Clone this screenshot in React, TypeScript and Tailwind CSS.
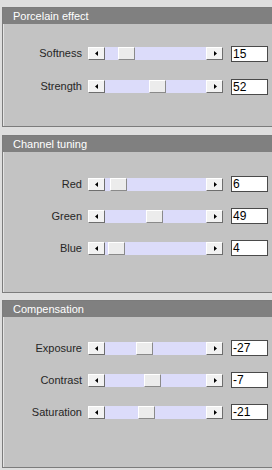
import React from "react";

type Row = { label: string; value: number; min: number; max: number };

const panels: { title: string; top: string; height: string; pt: string; rowH: string; rows: Row[] }[] = [
  {
    title: "Porcelain effect",
    top: "mt-[7px]",
    height: "h-[120px]",
    pt: "pt-[13px]",
    rowH: "h-[33px]",
    rows: [
      { label: "Softness", value: 15, min: 0, max: 100 },
      { label: "Strength", value: 52, min: 0, max: 100 },
    ],
  },
  {
    title: "Channel tuning",
    top: "mt-[8px]",
    height: "h-[158px]",
    pt: "pt-[16px]",
    rowH: "h-[32px]",
    rows: [
      { label: "Red", value: 6, min: 0, max: 100 },
      { label: "Green", value: 49, min: 0, max: 100 },
      { label: "Blue", value: 4, min: 0, max: 100 },
    ],
  },
  {
    title: "Compensation",
    top: "mt-[7px]",
    height: "h-[168px]",
    pt: "pt-[15px]",
    rowH: "h-[32px]",
    rows: [
      { label: "Exposure", value: -27, min: -100, max: 100 },
      { label: "Contrast", value: -7, min: -100, max: 100 },
      { label: "Saturation", value: -21, min: -100, max: 100 },
    ],
  },
];

function ArrowBtn({ dir }: { dir: "left" | "right" }) {
  return (
    <div className="w-[17px] h-[13px] bg-[#f2f2f2] border-t border-l border-t-white border-l-white border-b border-r border-b-[#6e6e6e] border-r-[#6e6e6e] flex items-center justify-center shrink-0">
      <svg width="4" height="5" viewBox="0 0 4 5">
        {dir === "left" ? (
          <polygon points="3,0 3,5 0,2.5" fill="#000" />
        ) : (
          <polygon points="1,0 1,5 4,2.5" fill="#000" />
        )}
      </svg>
    </div>
  );
}

function Slider({ value, min, max }: { value: number; min: number; max: number }) {
  const trackW = 101;
  const thumbW = 17;
  const left = Math.round(((value - min) / (max - min)) * (trackW - thumbW));
  return (
    <div className="flex items-center">
      <ArrowBtn dir="left" />
      <div className="relative w-[101px] h-[13px] bg-[#dcdcfa]">
        <div
          className="absolute top-0 w-[17px] h-[13px] bg-[#ececec] border-t border-l border-t-white border-l-white border-b border-r border-b-[#8a8a8a] border-r-[#8a8a8a]"
          style={{ left }}
        />
      </div>
      <ArrowBtn dir="right" />
    </div>
  );
}

export default function App() {
  return (
    <div
      className="w-[272px] h-[470px] overflow-hidden bg-[#dedede] pl-[2px] flex flex-col"
      style={{ fontFamily: '"Liberation Sans", Arial, sans-serif' }}
    >
      {panels.map((p) => (
        <div
          key={p.title}
          className={`${p.top} ${p.height} w-[290px] shrink-0 border-l border-t border-b border-[#7c7c7c] bg-[#c3c3c3] flex flex-col`}
        >
          <div className="h-[16px] bg-[#808080] text-white text-[11px] leading-[16px] pl-[10px] shrink-0">
            {p.title}
          </div>
          <div className={`flex-1 border-l border-l-[#e4e4e4] ${p.pt}`}>
            {p.rows.map((r) => (
              <div key={r.label} className={`${p.rowH} flex items-center`}>
                <div className="w-[78px] text-right text-[11px] text-[#262626] leading-none">
                  {r.label}
                </div>
                <div className="ml-[6px]">
                  <Slider value={r.value} min={r.min} max={r.max} />
                </div>
                <div className="ml-[8px] w-[37px] h-[16px] bg-white border border-[#4a4a4a] text-[12px] leading-[14px] pl-[1px] text-black">
                  {r.value}
                </div>
              </div>
            ))}
          </div>
        </div>
      ))}
    </div>
  );
}
